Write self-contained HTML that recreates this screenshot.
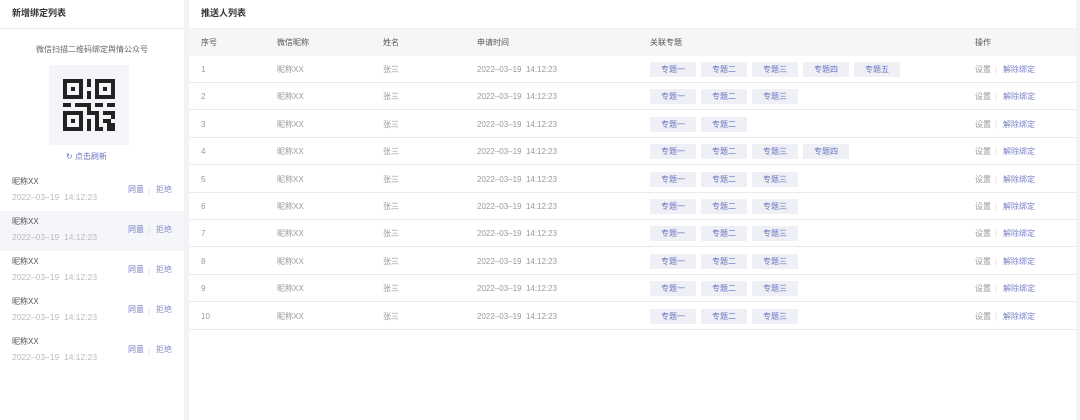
<!DOCTYPE html>
<html><head><meta charset="utf-8"><style>
*{margin:0;padding:0;box-sizing:border-box}
body{width:1080px;height:420px;background:#f2f3f5;font-family:"Liberation Sans","Noto Sans CJK SC",sans-serif;position:relative;overflow:hidden;font-size:8px;color:#999}
.p{position:absolute;background:#fff}
.a{position:absolute;white-space:nowrap;line-height:11px}
.t{font-size:9px;color:#333;font-weight:bold}
.row{position:absolute;left:189px;width:887px;height:27px;border-bottom:1px solid #e8eaef}
.tag{position:absolute;width:46px;height:15px;background:#eef0f6;color:#6b73bf;font-size:8px;line-height:15px;text-align:center}
.lk{color:#6b73bf}
</style></head><body>
<div class="p" style="left:0;top:0;width:184px;height:420px"></div>
<div class="p" style="left:189px;top:0;width:887px;height:420px"></div>
<div class="a t" style="left:12px;top:8px">新增绑定列表</div>
<div class="a" style="left:0;top:28px;width:184px;border-top:1px solid #eee"></div>
<div class="a" style="left:36px;top:44px;color:#666">微信扫描二维码绑定舆情公众号</div>
<div class="a" style="left:49px;top:65px;width:80px;height:80px;background:#f4f5f8"></div>
<svg class="a" style="left:63px;top:79px" width="52" height="52" viewBox="0 0 13 13" shape-rendering="crispEdges">
<g fill="#222">
<path d="M0 0h5v5h-5zM1 1v3h3v-3zM2 2h1v1h-1z" fill-rule="evenodd"/>
<path d="M8 0h5v5h-5zM9 1v3h3v-3zM10 2h1v1h-1z" fill-rule="evenodd"/>
<path d="M0 8h5v5h-5zM1 9v3h3v-3zM2 10h1v1h-1z" fill-rule="evenodd"/>
<path d="M6 0h1v2h-1zM6 3h1v2h-1zM0 6h2v1h-2zM3 6h3v1h-3zM6 6h1v3h-1zM8 6h2v1h-2zM11 6h2v1h-2zM7 8h2v1h-2zM10 8h3v1h-3zM6 10h1v3h-1zM8 9h1v4h-1zM10 10h2v1h-2zM11 11h2v2h-2zM9 12h1v1h-1zM12 9h1v1h-1z"/>
</g></svg>
<div class="a lk" style="left:66px;top:151px">↻ 点击刷新</div>
<div class="a" style="left:0;top:211px;width:184px;height:40px;background:#f5f6f9"></div>
<div id="L"></div>
<div class="a t" style="left:201px;top:8px">推送人列表</div>
<div class="a" style="left:189px;top:28px;width:887px;border-top:1px solid #eee"></div>
<div class="a" style="left:189px;top:29px;width:887px;height:27px;background:#f5f6f8"></div>
<div class="a" style="left:201px;top:37px;color:#555">序号</div>
<div class="a" style="left:277px;top:37px;color:#555">微信昵称</div>
<div class="a" style="left:383px;top:37px;color:#555">姓名</div>
<div class="a" style="left:477px;top:37px;color:#555">申请时间</div>
<div class="a" style="left:650px;top:37px;color:#555">关联专题</div>
<div class="a" style="left:975px;top:37px;color:#555">操作</div>
<div id="R"></div>
<script>
(function(){
var L='';for(var i=0;i<5;i++){var y=176+i*40;L+='<div class="a" style="left:12px;top:'+y+'px;color:#555">昵称XX</div><div class="a" style="left:12px;top:'+(y+16)+'px;color:#bbb;font-size:8.5px">2022–03–19&nbsp;&nbsp;14:12:23</div><div class="a lk" style="left:128px;top:'+(y+8)+'px">同意</div><div class="a" style="left:148px;top:'+(y+9)+'px;color:#ddd">|</div><div class="a lk" style="left:156px;top:'+(y+8)+'px;color:#8a90c8">拒绝</div>';}
document.getElementById('L').innerHTML=L;
var n=[5,3,2,4,3,3,3,3,3,3],names=['专题一','专题二','专题三','专题四','专题五'],R='';
for(var r=0;r<10;r++){var tp=Math.round(56+r*27.4);R+='<div class="row" style="top:'+tp+'px"></div>';var ty=tp+8;
R+='<div class="a" style="left:201px;top:'+ty+'px">'+(r+1)+'</div><div class="a" style="left:277px;top:'+ty+'px">昵称XX</div><div class="a" style="left:383px;top:'+ty+'px">张三</div><div class="a" style="left:477px;top:'+ty+'px">2022–03–19&nbsp;&nbsp;14:12:23</div>';
for(var k=0;k<n[r];k++)R+='<div class="tag" style="left:'+(650+k*51)+'px;top:'+(tp+6)+'px">'+names[k]+'</div>';
R+='<div class="a" style="left:975px;top:'+ty+'px">设置</div><div class="a" style="left:995px;top:'+ty+'px;color:#ddd">|</div><div class="a lk" style="left:1003px;top:'+ty+'px;color:#7a80c4">解除绑定</div>';}
document.getElementById('R').innerHTML=R;
})();
</script>
</body></html>
